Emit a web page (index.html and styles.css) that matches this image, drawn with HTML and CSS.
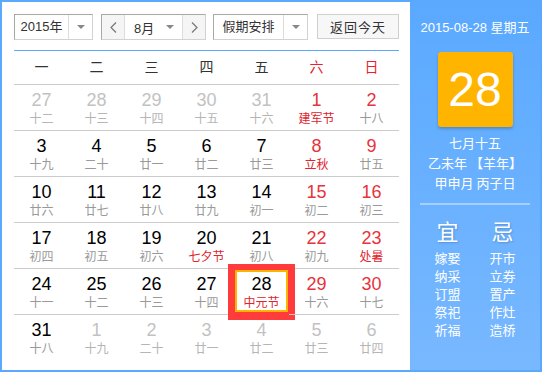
FILE: index.html
```html
<!DOCTYPE html>
<html lang="zh-CN">
<head>
<meta charset="utf-8">
<title>万年历</title>
<link rel="stylesheet" href="styles.css">
</head>
<body>
<div class="cal">
  <div class="main">
    <div class="toolbar">
      <div class="sel sel-year">
        <span class="sel-text">2015年</span>
        <span class="sel-arrow"><i class="tri"></i></span>
      </div>
      <div class="sel sel-month">
        <span class="nav-btn"><svg width="7" height="11" viewBox="0 0 7 11"><path d="M6 0.5 L1 5.5 L6 10.5" fill="none" stroke="#777" stroke-width="1.2"/></svg></span>
        <span class="month-text">8月<i class="tri"></i></span>
        <span class="nav-btn nav-next"><svg width="7" height="11" viewBox="0 0 7 11"><path d="M1 0.5 L6 5.5 L1 10.5" fill="none" stroke="#777" stroke-width="1.2"/></svg></span>
      </div>
      <div class="sel sel-holiday">
        <span class="sel-text">假期安排</span>
        <span class="sel-arrow"><i class="tri"></i></span>
      </div>
      <div class="btn-today">返回今天</div>
    </div>

    <div class="weekdays">
      <span>一</span><span>二</span><span>三</span><span>四</span><span>五</span><span class="we">六</span><span class="we">日</span>
    </div>

    <div class="days">
      <div class="day other"><b>27</b><i>十二</i></div>
      <div class="day other"><b>28</b><i>十三</i></div>
      <div class="day other"><b>29</b><i>十四</i></div>
      <div class="day other"><b>30</b><i>十五</i></div>
      <div class="day other"><b>31</b><i>十六</i></div>
      <div class="day red fest"><b>1</b><i>建军节</i></div>
      <div class="day red"><b>2</b><i>十八</i></div>

      <div class="day"><b>3</b><i>十九</i></div>
      <div class="day"><b>4</b><i>二十</i></div>
      <div class="day"><b>5</b><i>廿一</i></div>
      <div class="day"><b>6</b><i>廿二</i></div>
      <div class="day"><b>7</b><i>廿三</i></div>
      <div class="day red fest"><b>8</b><i>立秋</i></div>
      <div class="day red"><b>9</b><i>廿五</i></div>

      <div class="day"><b>10</b><i>廿六</i></div>
      <div class="day"><b>11</b><i>廿七</i></div>
      <div class="day"><b>12</b><i>廿八</i></div>
      <div class="day"><b>13</b><i>廿九</i></div>
      <div class="day"><b>14</b><i>初一</i></div>
      <div class="day red"><b>15</b><i>初二</i></div>
      <div class="day red"><b>16</b><i>初三</i></div>

      <div class="day"><b>17</b><i>初四</i></div>
      <div class="day"><b>18</b><i>初五</i></div>
      <div class="day"><b>19</b><i>初六</i></div>
      <div class="day fest"><b>20</b><i>七夕节</i></div>
      <div class="day"><b>21</b><i>初八</i></div>
      <div class="day red"><b>22</b><i>初九</i></div>
      <div class="day red fest"><b>23</b><i>处暑</i></div>

      <div class="day"><b>24</b><i>十一</i></div>
      <div class="day"><b>25</b><i>十二</i></div>
      <div class="day"><b>26</b><i>十三</i></div>
      <div class="day"><b>27</b><i>十四</i></div>
      <div class="day fest today"><span class="mark"></span><b>28</b><i>中元节</i></div>
      <div class="day red"><b>29</b><i>十六</i></div>
      <div class="day red"><b>30</b><i>十七</i></div>

      <div class="day last"><b>31</b><i>十八</i></div>
      <div class="day other last"><b>1</b><i>十九</i></div>
      <div class="day other last"><b>2</b><i>二十</i></div>
      <div class="day other last"><b>3</b><i>廿一</i></div>
      <div class="day other last"><b>4</b><i>廿二</i></div>
      <div class="day other last"><b>5</b><i>廿三</i></div>
      <div class="day other last"><b>6</b><i>廿四</i></div>
    </div>
  </div>

  <div class="side">
    <div class="side-date">2015-08-28 星期五</div>
    <div class="big-day">28</div>
    <div class="lunar-info">
      <div>七月十五</div>
      <div>乙未年 【羊年】</div>
      <div>甲申月 丙子日</div>
    </div>
    <div class="side-sep"></div>
    <div class="yiji">
      <div class="yj-col">
        <div class="yj-head">宜</div>
        <div>嫁娶</div><div>纳采</div><div>订盟</div><div>祭祀</div><div>祈福</div>
      </div>
      <div class="yj-col">
        <div class="yj-head">忌</div>
        <div>开市</div><div>立券</div><div>置产</div><div>作灶</div><div>造桥</div>
      </div>
    </div>
  </div>
</div>
</body>
</html>
```
FILE: styles.css
```css
* { box-sizing: border-box; }
html, body { margin: 0; padding: 0; background: #fff; }
body { font-family: "Liberation Sans", "Noto Sans CJK SC", sans-serif; }

.cal {
  display: flex;
  width: 542px;
  height: 372px;
  border: 2px solid #5aa9ff;
  background: #fff;
}

.main {
  width: 408px;
  padding: 12px 11px 0 12px;
}

/* toolbar */
.toolbar {
  display: flex;
  height: 26px;
  font-size: 13px;
  color: #333;
  font-family: "Liberation Sans", "Noto Sans CJK SC", sans-serif;
}
.sel {
  display: flex;
  height: 26px;
  border: 1px solid #d2d2d2;
  border-top-color: #a8a8a8;
  border-left-color: #a8a8a8;
  background: #fff;
}
.sel-year { width: 79px; margin-right: 8px; }
.sel-month { width: 105px; margin-right: 7px; }
.sel-holiday { width: 95px; margin-right: 9px; }
.sel-text {
  flex: 1;
  display: flex;
  align-items: center;
  justify-content: center;
  line-height: 24px;
}
.sel-arrow {
  width: 24px;
  display: flex;
  align-items: center;
  justify-content: center;
  border-left: 1px solid #dcdcdc;
}
.tri {
  display: inline-block;
  width: 0;
  height: 0;
  border-left: 4px solid transparent;
  border-right: 4px solid transparent;
  border-top: 4px solid #888;
}
.nav-btn {
  width: 23px;
  background: #f5f5f5;
  display: flex;
  align-items: center;
  justify-content: center;
  border-right: 1px solid #dcdcdc;
}
.nav-btn.nav-next { border-right: none; border-left: 1px solid #dcdcdc; }
.month-text {
  flex: 1;
  display: flex;
  align-items: center;
  justify-content: space-between;
  padding: 0 8px 0 9px;
}
.btn-today {
  width: 82px;
  height: 25px;
  border: 1px solid #d0d0d0;
  background: #f7f7f7;
  display: flex;
  align-items: center;
  justify-content: center;
  font-size: 13px;
  letter-spacing: 1px;
  color: #333;
}

/* weekdays */
.weekdays {
  margin-top: 10px;
  border-top: 1px solid #5aa9ff;
  border-bottom: 1px solid #ccc;
  display: grid;
  grid-template-columns: repeat(7, 55px);
  height: 35px;
  font-family: "Noto Sans CJK SC", sans-serif;
  font-size: 14px;
  color: #333;
}
.weekdays span { text-align: center; line-height: 31px; }
.weekdays .we { color: #e8232f; }

/* days */
.days {
  display: grid;
  grid-template-columns: repeat(7, 55px);
}
.day {
  position: relative;
  height: 46px;
  border-bottom: 1px solid #ccc;
  padding-top: 5px;
  text-align: center;
}
.day.last { border-bottom: none; }
.day b {
  position: relative;
  display: block;
  font-weight: normal;
  font-family: "Liberation Sans", Arial, sans-serif;
  font-size: 18px;
  line-height: 20px;
  color: #000;
}
.day i {
  position: relative;
  display: block;
  font-style: normal;
  font-family: "Noto Sans CJK SC", sans-serif;
  font-size: 12px;
  line-height: 16px;
  color: #999;
}
.day.red b { color: #e8323c; }
.day.fest i { color: #e0232d; }
.day.other b { color: #c2c2c2; }
.day.other i { color: #b5b5b5; }

.mark {
  position: absolute;
  left: -6px;
  top: -5px;
  width: 67px;
  height: 56px;
  border: 7px solid #ff3b3b;
  border-bottom-width: 8px;
  border-top-width: 6px;
  box-shadow: inset 0 0 0 2px #ffb400;
  background: #fff;
}

/* side panel */
.side {
  width: 130px;
  background: linear-gradient(#5aa9ff, #78b8ff);
  color: #fff;
  font-family: "Noto Sans CJK SC", sans-serif;
  display: flex;
  flex-direction: column;
  align-items: center;
  padding-top: 17px;
}
.side-date {
  font-family: "Liberation Sans", "Noto Sans CJK SC", sans-serif;
  font-size: 13px;
  line-height: 18px;
}
.big-day {
  margin-top: 15px;
  width: 75px;
  height: 75px;
  background: #ffb400;
  border-radius: 3px;
  box-shadow: 0 2px 3px rgba(0, 0, 0, 0.2);
  font-family: "Liberation Sans", Arial, sans-serif;
  font-size: 48px;
  line-height: 75px;
  text-align: center;
  color: #fff;
}
.lunar-info {
  margin-top: 6px;
  font-size: 13px;
  line-height: 20px;
  text-align: center;
}
.side-sep {
  margin-top: 10px;
  width: 110px;
  height: 2px;
  background: rgba(255, 255, 255, 0.4);
}
.yiji {
  display: flex;
  margin-top: 11px;
}
.yj-col {
  width: 55px;
  text-align: center;
  font-size: 13px;
  line-height: 18px;
}
.yj-head {
  font-size: 22px;
  line-height: 28px;
  margin-bottom: 5px;
  text-shadow: 1px 1px 2px rgba(0, 0, 0, 0.2);
}
```
